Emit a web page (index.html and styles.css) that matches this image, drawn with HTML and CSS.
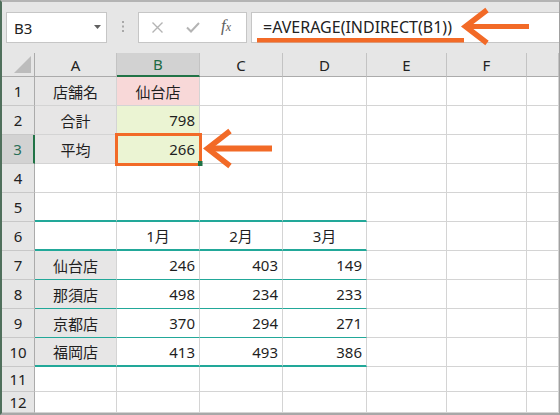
FILE: index.html
```html
<!DOCTYPE html>
<html lang="ja">
<head>
<meta charset="utf-8">
<title>Excel INDIRECT</title>
<link rel="stylesheet" href="styles.css">
</head>
<body>
<div class="frame">
  <div class="fbar">
    <div class="namebox"><span class="nm">B3</span><svg class="dd" width="7" height="4" viewBox="0 0 7 4"><polygon points="0,0 7,0 3.5,4" fill="#606060"/></svg></div>
    <div class="dots"><svg width="2" height="11" viewBox="0 0 2 11"><rect x="0" y="0" width="2" height="2" fill="#a8a8a8"/><rect x="0" y="4.5" width="2" height="2" fill="#a8a8a8"/><rect x="0" y="9" width="2" height="2" fill="#a8a8a8"/></svg></div>
    <div class="fxbox">
      <svg class="ix" width="11" height="11" viewBox="0 0 11 11"><path d="M0.5 0.5 L10.5 10.5 M10.5 0.5 L0.5 10.5" stroke="#b4b4b4" stroke-width="1.4" fill="none"/></svg>
      <svg class="ok" width="14" height="11" viewBox="0 0 14 11"><path d="M1 5.5 L5 9.5 L13 1" stroke="#b4b4b4" stroke-width="2" fill="none"/></svg>
      <span class="fx">f<span class="fxs">x</span></span>
    </div>
    <div class="formula">=AVERAGE(INDIRECT(B1))</div>
  </div>
  <div class="sheet">
    <div class="corner"><svg width="17" height="17" viewBox="0 0 17 17"><polygon points="17,0 17,17 0,17" fill="#bcbcbc"/></svg></div>
    <div class="ch">A</div><div class="ch sel">B</div><div class="ch">C</div><div class="ch">D</div><div class="ch">E</div><div class="ch">F</div><div class="ch"></div>

    <div class="rh">1</div><div class="c ctr gray">店舗名</div><div class="c ctr pink">仙台店</div><div class="c"></div><div class="c"></div><div class="c"></div><div class="c"></div><div class="c"></div>
    <div class="rh">2</div><div class="c ctr gray">合計</div><div class="c num green">798</div><div class="c"></div><div class="c"></div><div class="c"></div><div class="c"></div><div class="c"></div>
    <div class="rh rsel">3</div><div class="c ctr gray">平均</div><div class="c num green">266</div><div class="c"></div><div class="c"></div><div class="c"></div><div class="c"></div><div class="c"></div>
    <div class="rh">4</div><div class="c"></div><div class="c"></div><div class="c"></div><div class="c"></div><div class="c"></div><div class="c"></div><div class="c"></div>
    <div class="rh">5</div><div class="c tk"></div><div class="c tk"></div><div class="c tk"></div><div class="c tk"></div><div class="c"></div><div class="c"></div><div class="c"></div>
    <div class="rh">6</div><div class="c tk"></div><div class="c ctr tk">1月</div><div class="c ctr tk">2月</div><div class="c ctr tk">3月</div><div class="c"></div><div class="c"></div><div class="c"></div>
    <div class="rh">7</div><div class="c ctr gray tn">仙台店</div><div class="c num tn">246</div><div class="c num tn">403</div><div class="c num tn">149</div><div class="c"></div><div class="c"></div><div class="c"></div>
    <div class="rh">8</div><div class="c ctr gray tn">那須店</div><div class="c num tn">498</div><div class="c num tn">234</div><div class="c num tn">233</div><div class="c"></div><div class="c"></div><div class="c"></div>
    <div class="rh">9</div><div class="c ctr gray tn">京都店</div><div class="c num tn">370</div><div class="c num tn">294</div><div class="c num tn">271</div><div class="c"></div><div class="c"></div><div class="c"></div>
    <div class="rh">10</div><div class="c ctr gray tk">福岡店</div><div class="c num tk">413</div><div class="c num tk">493</div><div class="c num tk">386</div><div class="c"></div><div class="c"></div><div class="c"></div>
    <div class="rh">11</div><div class="c"></div><div class="c"></div><div class="c"></div><div class="c"></div><div class="c"></div><div class="c"></div><div class="c"></div>
    <div class="rh">12</div><div class="c"></div><div class="c"></div><div class="c"></div><div class="c"></div><div class="c"></div><div class="c"></div><div class="c"></div>
  </div>
  <svg class="marks" width="560" height="415" viewBox="0 0 560 415">
    <rect x="257" y="38" width="207" height="4.5" fill="#f26a27"/>
    <path d="M487 10 L465.5 26.5 L487 43" stroke="#f26a27" stroke-width="5.5" fill="none"/>
    <rect x="468" y="24" width="61" height="5" fill="#f26a27"/>
    <rect x="116.5" y="134.5" width="84" height="30" stroke="#f26a27" stroke-width="3" fill="none"/>
    <rect x="198" y="161" width="4.5" height="5" fill="#217346"/>
    <path d="M230 131 L207.5 148.5 L230 166" stroke="#f26a27" stroke-width="5.5" fill="none"/>
    <rect x="210" y="145.5" width="62" height="6" fill="#f26a27"/>
  </svg>
</div>
</body>
</html>
```

FILE: styles.css
```css
* { box-sizing: border-box; }
html, body { margin: 0; padding: 0; }
body {
  width: 560px;
  height: 415px;
  overflow: hidden;
  background: #e6e6e6;
  font-family: "Noto Sans", "Noto Sans CJK JP", sans-serif;
  color: #1f1f1f;
}
.frame {
  position: relative;
  width: 560px;
  height: 415px;
  border-left: 2px solid #50705c;
  border-top: 2px solid #b4b4b4;
  border-right: 1px solid #a0a0a0;
  border-bottom: 2px solid #a8a8a8;
  display: flex;
  flex-direction: column;
  overflow: hidden;
  background: #e6e6e6;
}
.fbar {
  display: flex;
  align-items: stretch;
  height: 51px;
  padding: 10px 0 10px 4px;
  flex: none;
}
.namebox {
  width: 101px;
  background: #fff;
  border: 1px solid #c6c6c6;
  display: flex;
  align-items: center;
  padding: 0 5px 0 7px;
}
.nm { font-size: 15px; color: #222; }
.dd { margin-left: auto; margin-top: -2px; }
.dots {
  width: 31px;
  display: flex;
  align-items: center;
  justify-content: center;
  padding-bottom: 3px;
}
.fxbox {
  width: 109px;
  background: #fff;
  border: 1px solid #c6c6c6;
  display: flex;
  align-items: center;
  padding-left: 13px;
}
.ok { margin-left: 23px; }
.fx {
  margin-left: 21px;
  font-family: "Liberation Serif", serif;
  font-style: italic;
  font-size: 17px;
  color: #606060;
  margin-top: -3px;
}
.fxs { font-size: 12px; }
.formula {
  flex: 1;
  margin-left: 4px;
  background: #fff;
  border: 1px solid #c6c6c6;
  border-right: none;
  display: flex;
  align-items: center;
  padding: 0 0 2px 11px;
  font-size: 16px;
  color: #222;
}
.sheet {
  flex: 1;
  display: grid;
  grid-template-columns: 33px 82px 83px 83px 84px 80px 80px 1fr;
  grid-template-rows: 24px repeat(10, 29px) 25px 1fr;
  background: #fff;
  font-size: 15px;
}
.corner {
  background: #e6e6e6;
  border-right: 1px solid #ababab;
  border-bottom: 1px solid #ababab;
  display: flex;
  align-items: flex-end;
  justify-content: flex-end;
  padding: 0 3px 3px 0;
}
.ch {
  background: #e6e6e6;
  border-right: 1px solid #c3c3c3;
  border-bottom: 1px solid #ababab;
  display: flex;
  align-items: center;
  justify-content: center;
  color: #222;
}
.ch.sel {
  background: #d2d2d2;
  color: #1e6b45;
  border-bottom: 2px solid #217346;
}
.rh {
  background: #e6e6e6;
  border-right: 1px solid #ababab;
  border-bottom: 1px solid #c8c8c8;
  display: flex;
  align-items: center;
  justify-content: center;
  color: #222;
}
.rh.rsel {
  background: #d2d2d2;
  color: #2a6e57;
  border-right: 2px solid #217346;
}
.c {
  border-right: 1px solid #d4d4d4;
  border-bottom: 1px solid #d4d4d4;
  display: flex;
  align-items: center;
  padding: 0 4px;
  white-space: nowrap;
}
.ctr { justify-content: center; }
.num { justify-content: flex-end; }
.gray { background: #e7e6e6; }
.pink { background: #f8d8d8; }
.green { background: #ebf4d3; }
.tk { border-bottom: 2px solid #22a899; }
.tn { border-bottom: 1px solid #22a899; }
.marks {
  position: absolute;
  left: -2px;
  top: -2px;
  pointer-events: none;
}
```
